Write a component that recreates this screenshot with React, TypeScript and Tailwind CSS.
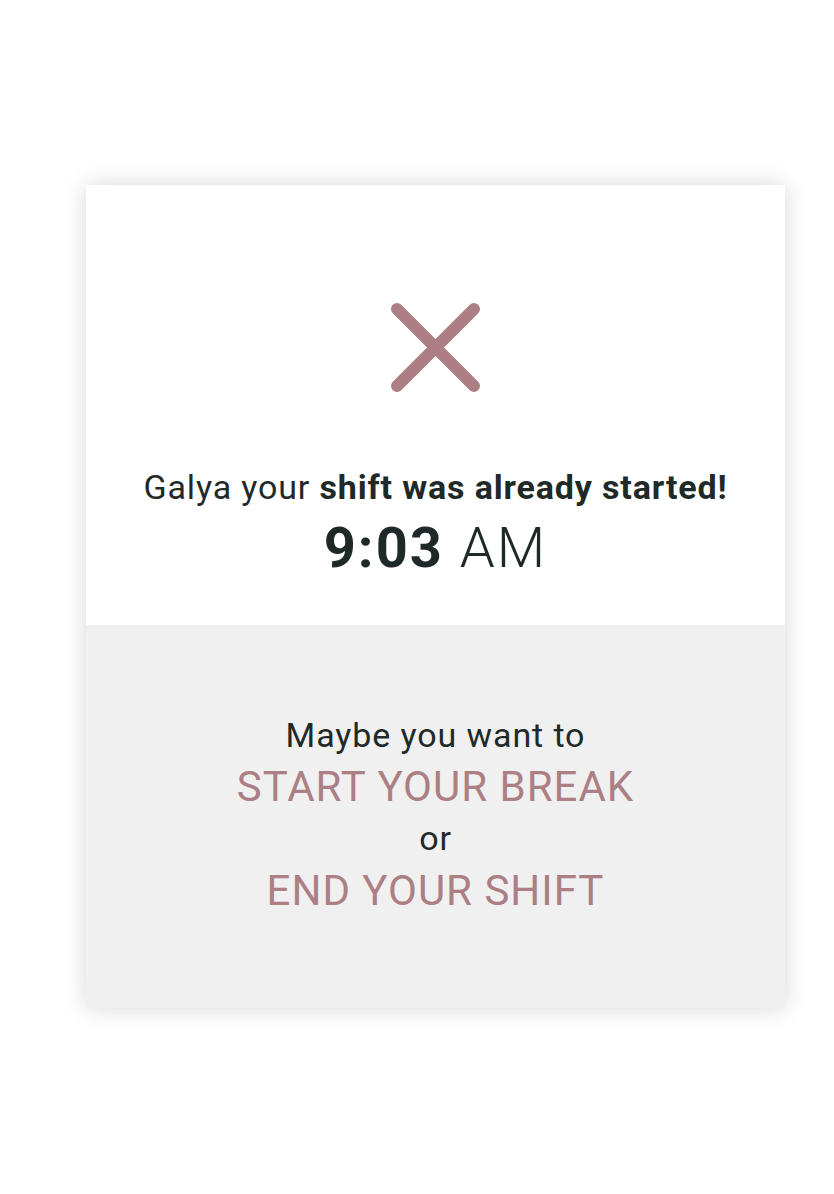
export default function App() {
  return (
    <div className="min-h-[1194px] bg-white pt-[185px] pl-[86px]" style={{ fontFamily: "Roboto, 'Noto Sans', sans-serif" }}>
      <div className="w-[699px] bg-white shadow-[0_0_22px_rgba(0,0,0,0.16)]">
        <div className="flex h-[440px] flex-col items-center pt-[118px]">
          <svg width="89" height="89" viewBox="0 0 89 89" fill="none">
            <path d="M6 6 L83 83 M83 6 L6 83" stroke="#ab7f84" strokeWidth="12" strokeLinecap="round" />
          </svg>
          <p className="mt-[75px] whitespace-nowrap text-[34px] leading-[40px] tracking-[0.85px] text-[#1f2a28]">
            Galya your <span className="font-bold">shift was already started!</span>
          </p>
          <p className="mt-[13px] whitespace-nowrap text-[56px] leading-[56px] tracking-[2px] text-[#1f2a28]">
            <span className="font-bold">9:03</span> <span className="font-light">AM</span>
          </p>
        </div>
        <div className="flex h-[383px] flex-col items-center bg-[#f0f0f0] pt-[90px] text-center">
          <p className="text-[34px] leading-[40px] tracking-[0.9px] text-[#1f2a28]">Maybe you want to</p>
          <button className="mt-[7px] text-[42px] leading-[50px] tracking-[1px] text-[#ab7f84]">START YOUR BREAK</button>
          <p className="mt-[6px] text-[34px] leading-[40px] tracking-[0.9px] text-[#1f2a28]">or</p>
          <button className="mt-[8px] text-[42px] leading-[50px] tracking-[1px] text-[#ab7f84]">END YOUR SHIFT</button>
        </div>
      </div>
    </div>
  );
}
